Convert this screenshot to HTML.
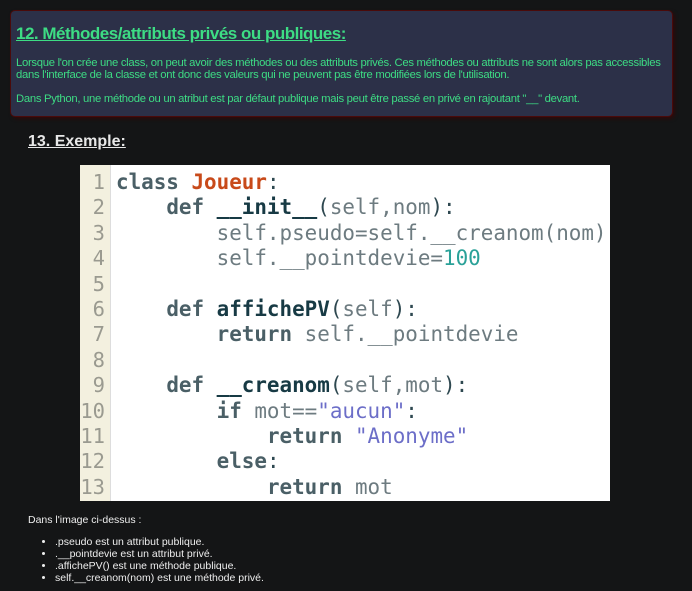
<!DOCTYPE html>
<html><head><meta charset="utf-8"><style>
body{margin:0;background:#141516;width:692px;height:591px;overflow:hidden;font-family:"Liberation Sans",sans-serif;position:relative}
.box{position:absolute;left:11px;top:11px;width:661px;height:105px;background:#2c3048;border-radius:4px;box-shadow:0 0 0 1px #4a0a0a,2px 2px 4px #3a0505}
.box h2{margin:0;position:absolute;top:13px;left:5px;font-size:17px;color:#3ddc84;text-decoration:underline;font-weight:bold;letter-spacing:-0.5px}
.box p{margin:0;position:absolute;left:5px;font-size:11.3px;color:#3ddc84;line-height:12px;letter-spacing:-0.3px;white-space:nowrap}
h3{position:absolute;left:28px;top:133px;margin:0;font-size:16px;color:#e8e8e8;text-decoration:underline;font-weight:bold}
.code{position:absolute;left:80px;top:165px;width:530px;height:336px;background:#fff;overflow:hidden}
.gut{position:absolute;left:0;top:0;width:30px;height:336px;background:#f3f0df;border-right:1px solid #ddd}
.ln{position:absolute;left:0;width:25px;text-align:right;font-family:"DejaVu Sans Mono",monospace;font-size:20.5px;color:#9a9a90}
.l{position:absolute;left:36px;white-space:pre;font-family:"DejaVu Sans Mono",monospace;font-size:20.9px;color:#6d7b80}
.k{color:#4a5f66;font-weight:bold}.f{color:#173a44;font-weight:bold}.c{color:#c84a1a;font-weight:bold}.s{color:#6c6ec8}.n{color:#2aa198}.p{color:#2e4850}
.t{position:absolute;left:28px;top:514px;font-size:10.5px;color:#eee}
ul{position:absolute;left:28px;top:536px;margin:0;padding-left:27px;font-size:10.5px;color:#eee;line-height:12px}
</style></head><body>
<div class="box">
<h2>12. Méthodes/attributs privés ou publiques:</h2>
<p style="top:46px">Lorsque l'on crée une class, on peut avoir des méthodes ou des attributs privés. Ces méthodes ou attributs ne sont alors pas accessibles<br>dans l'interface de la classe et ont donc des valeurs qui ne peuvent pas être modifiées lors de l'utilisation.</p>
<p style="top:82px">Dans Python, une méthode ou un atribut est par défaut publique mais peut être passé en privé en rajoutant "__" devant.</p>
</div>
<h3>13. Exemple:</h3>
<div class="code"><div class="gut"></div>
<div class="ln" style="top:5px">1</div><div class="ln" style="top:30px">2</div><div class="ln" style="top:56px">3</div><div class="ln" style="top:81px">4</div><div class="ln" style="top:107px">5</div><div class="ln" style="top:132px">6</div><div class="ln" style="top:157px">7</div><div class="ln" style="top:183px">8</div><div class="ln" style="top:208px">9</div><div class="ln" style="top:234px">10</div><div class="ln" style="top:259px">11</div><div class="ln" style="top:284px">12</div><div class="ln" style="top:310px">13</div>
<div class="l" style="top:5px"><span class="k">class</span> <span class="c">Joueur</span><span class="p">:</span></div>
<div class="l" style="top:30px">    <span class="k">def</span> <span class="f">__init__</span><span class="p">(</span>self,nom<span class="p">):</span></div>
<div class="l" style="top:56px">        self.pseudo=self.__creanom(nom)</div>
<div class="l" style="top:81px">        self.__pointdevie=<span class="n">100</span></div>
<div class="l" style="top:132px">    <span class="k">def</span> <span class="f">affichePV</span><span class="p">(</span>self<span class="p">):</span></div>
<div class="l" style="top:157px">        <span class="k">return</span> self.__pointdevie</div>
<div class="l" style="top:208px">    <span class="k">def</span> <span class="f">__creanom</span><span class="p">(</span>self,mot<span class="p">):</span></div>
<div class="l" style="top:234px">        <span class="k">if</span> mot==<span class="s">"aucun"</span><span class="p">:</span></div>
<div class="l" style="top:259px">            <span class="k">return</span> <span class="s">"Anonyme"</span></div>
<div class="l" style="top:284px">        <span class="k">else</span><span class="p">:</span></div>
<div class="l" style="top:310px">            <span class="k">return</span> mot</div>
</div>
<div class="t">Dans l'image ci-dessus :</div>
<ul><li>.pseudo est un attribut publique.</li><li>.__pointdevie est un attribut privé.</li><li>.affichePV() est une méthode publique.</li><li>self.__creanom(nom) est une méthode privé.</li></ul>
</body></html>
